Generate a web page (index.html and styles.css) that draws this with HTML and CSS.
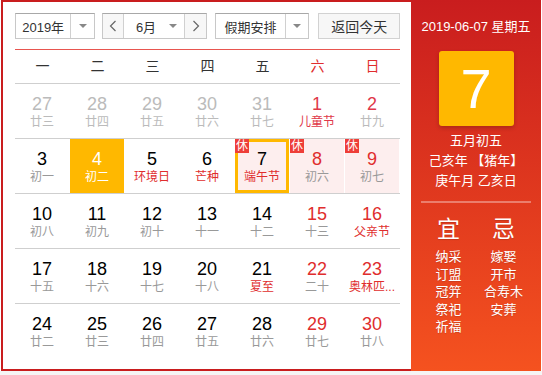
FILE: index.html
```html
<!DOCTYPE html>
<html lang="zh-CN">
<head>
<meta charset="utf-8">
<title>万年历</title>
<link rel="stylesheet" href="styles.css">
</head>
<body>
<div class="page">
  <div class="cal">
    <div class="main">
      <div class="toolbar">
        <div class="sel sel-year">
          <span class="sel-text">2019年</span>
          <span class="sel-arrow"><i class="tri"></i></span>
        </div>
        <div class="sel sel-month">
          <span class="nav nav-prev"><svg width="8" height="12" viewBox="0 0 8 12"><polyline points="6.5,1 1.5,6 6.5,11" fill="none" stroke="#666" stroke-width="1.2"/></svg></span>
          <span class="sel-text month-text">6月</span>
          <span class="month-arrow"><i class="tri"></i></span>
          <span class="nav nav-next"><svg width="8" height="12" viewBox="0 0 8 12"><polyline points="1.5,1 6.5,6 1.5,11" fill="none" stroke="#666" stroke-width="1.2"/></svg></span>
        </div>
        <div class="sel sel-holiday">
          <span class="sel-text">假期安排</span>
          <span class="sel-arrow"><i class="tri"></i></span>
        </div>
        <div class="btn-today">返回今天</div>
      </div>
      <div class="weekhead">
        <span>一</span><span>二</span><span>三</span><span>四</span><span>五</span><span class="wk">六</span><span class="wk">日</span>
      </div>
      <div class="grid">
        <div class="row">
          <div class="cell other"><b>27</b><em>廿三</em></div>
          <div class="cell other"><b>28</b><em>廿四</em></div>
          <div class="cell other"><b>29</b><em>廿五</em></div>
          <div class="cell other"><b>30</b><em>廿六</em></div>
          <div class="cell other"><b>31</b><em>廿七</em></div>
          <div class="cell other weekend"><b>1</b><em class="fest">儿童节</em></div>
          <div class="cell other weekend"><b>2</b><em>廿九</em></div>
        </div>
        <div class="row">
          <div class="cell"><b>3</b><em>初一</em></div>
          <div class="cell selected"><b>4</b><em>初二</em></div>
          <div class="cell"><b>5</b><em class="fest">环境日</em></div>
          <div class="cell"><b>6</b><em class="fest">芒种</em></div>
          <div class="cell rest today"><span class="badge">休</span><b>7</b><em class="fest">端午节</em></div>
          <div class="cell rest weekend"><span class="badge">休</span><b>8</b><em>初六</em></div>
          <div class="cell rest weekend"><span class="badge">休</span><b>9</b><em>初七</em></div>
        </div>
        <div class="row">
          <div class="cell"><b>10</b><em>初八</em></div>
          <div class="cell"><b>11</b><em>初九</em></div>
          <div class="cell"><b>12</b><em>初十</em></div>
          <div class="cell"><b>13</b><em>十一</em></div>
          <div class="cell"><b>14</b><em>十二</em></div>
          <div class="cell weekend"><b>15</b><em>十三</em></div>
          <div class="cell weekend"><b>16</b><em class="fest">父亲节</em></div>
        </div>
        <div class="row">
          <div class="cell"><b>17</b><em>十五</em></div>
          <div class="cell"><b>18</b><em>十六</em></div>
          <div class="cell"><b>19</b><em>十七</em></div>
          <div class="cell"><b>20</b><em>十八</em></div>
          <div class="cell"><b>21</b><em class="fest">夏至</em></div>
          <div class="cell weekend"><b>22</b><em>二十</em></div>
          <div class="cell weekend"><b>23</b><em class="fest">奥林匹...</em></div>
        </div>
        <div class="row">
          <div class="cell"><b>24</b><em>廿二</em></div>
          <div class="cell"><b>25</b><em>廿三</em></div>
          <div class="cell"><b>26</b><em>廿四</em></div>
          <div class="cell"><b>27</b><em>廿五</em></div>
          <div class="cell"><b>28</b><em>廿六</em></div>
          <div class="cell weekend"><b>29</b><em>廿七</em></div>
          <div class="cell weekend"><b>30</b><em>廿八</em></div>
        </div>
      </div>
    </div>
    <div class="side">
      <div class="side-date">2019-06-07 星期五</div>
      <div class="side-day">7</div>
      <div class="side-lunar">
        <div>五月初五</div>
        <div>己亥年 【猪年】</div>
        <div>庚午月 乙亥日</div>
      </div>
      <div class="side-line"></div>
      <div class="yiji">
        <div class="yj-col">
          <div class="yj-title">宜</div>
          <div>纳采</div><div>订盟</div><div>冠笄</div><div>祭祀</div><div>祈福</div>
        </div>
        <div class="yj-col">
          <div class="yj-title">忌</div>
          <div>嫁娶</div><div>开市</div><div>合寿木</div><div>安葬</div>
        </div>
      </div>
    </div>
  </div>
</div>
</body>
</html>
```

FILE: styles.css
```css
* { box-sizing: border-box; }
html, body { margin: 0; padding: 0; }
body {
  background: #f5f5f5;
  font-family: "Liberation Sans", "Noto Sans CJK SC", sans-serif;
  color: #333;
}
.page {
  background: #fff;
  padding-left: 1px;
  height: 371px;
}
.cal {
  display: flex;
  width: 540px;
  height: 371px;
}
.main {
  width: 410px;
  border: 2px solid #c91d1e;
  border-right: 0;
  padding: 11px 11px 0 12px;
}
.toolbar {
  display: flex;
  height: 26px;
  font-size: 13px;
}
.sel {
  display: flex;
  height: 26px;
  border: 1px solid #c8c8c8;
  border-top-color: #a8a8a8;
  background: #fff;
}
.sel-text {
  display: flex;
  align-items: center;
  justify-content: center;
  color: #333;
}
.sel-arrow, .month-arrow {
  display: flex;
  align-items: center;
  justify-content: center;
}
.sel-arrow { width: 24px; border-left: 1px solid #d0d0d0; }
.tri {
  display: block;
  width: 0; height: 0;
  border-left: 4px solid transparent;
  border-right: 4px solid transparent;
  border-top: 4px solid #888;
}
.sel-year { width: 80px; }
.sel-year .sel-text { width: 55px; }
.sel-month { width: 106px; margin-left: 7px; }
.nav {
  display: flex;
  align-items: center;
  justify-content: center;
  background: #f7f7f7;
}
.nav-prev { width: 21px; border-right: 1px solid #d0d0d0; }
.nav-next { width: 22px; border-left: 1px solid #d0d0d0; }
.month-text { width: 38px; padding-left: 6px; }
.month-arrow { width: 22px; }
.sel-holiday { width: 94px; margin-left: 8px; }
.sel-holiday .sel-text { width: 69px; }
.btn-today {
  width: 82px;
  height: 26px;
  margin-left: 9px;
  border: 1px solid #d2d2d2;
  background: #f7f7f7;
  display: flex;
  align-items: center;
  justify-content: center;
  font-size: 14px;
  color: #333;
}
.weekhead {
  display: grid;
  grid-template-columns: repeat(7, 55px);
  margin-top: 10px;
  border-top: 1px solid #e8554f;
  border-bottom: 1px solid #cfcfcf;
  height: 35px;
  align-items: center;
  font-size: 14px;
  padding-bottom: 4px;
}
.weekhead span { text-align: center; color: #333; }
.weekhead .wk { color: #e02d2d; }
.row {
  display: grid;
  grid-template-columns: repeat(7, 55px);
  height: 55px;
  border-bottom: 1px solid #cfcfcf;
}
.row:last-child { border-bottom: 0; }
.cell {
  position: relative;
  width: 54px;
  height: 54px;
  display: flex;
  flex-direction: column;
  align-items: center;
  padding-top: 10px;
  text-align: center;
}
.cell b {
  display: block;
  font-weight: normal;
  font-size: 18px;
  line-height: 20px;
  color: #000;
}
.cell em {
  display: block;
  font-style: normal;
  font-size: 12px;
  line-height: 17px;
  color: #999;
  white-space: nowrap;
}
.cell em.fest { color: #e02d2d; }
.cell.weekend b { color: #e02d2d; }
.cell.other b { color: #bbb; }
.cell.other em { color: #bbb; }
.cell.other.weekend b { color: #e0384a; }
.cell.other em.fest { color: #e0384a; }
.cell.rest { background: #fdeeee; }
.cell.selected { background: #ffb800; }
.cell.selected b, .cell.selected em { color: #fff; }
.cell.today { border: 3px solid #ffb800; padding-top: 7px; }
.badge {
  position: absolute;
  left: 0;
  top: 0;
  width: 14px;
  height: 14px;
  background: #ee3e38;
  color: #fff;
  font-size: 12px;
  line-height: 14px;
  text-align: center;
}
.cell.today .badge { left: -3px; top: -3px; }
.side {
  width: 130px;
  height: 371px;
  background: linear-gradient(180deg, #c91d1e 0%, #f5521f 100%);
  color: #fff;
  text-align: center;
  padding-top: 18px;
}
.side-date { font-size: 13px; line-height: 18px; }
.side-day {
  width: 75px;
  height: 75px;
  margin: 15px auto 0;
  background: #ffb800;
  border-radius: 3px;
  box-shadow: 0 2px 4px rgba(0, 0, 0, 0.2);
  font-size: 56px;
  line-height: 75px;
}
.side-lunar { margin-top: 5px; font-size: 13px; line-height: 20px; }
.side-line {
  height: 2px;
  margin: 10px 10px 0;
  background: rgba(255, 255, 255, 0.35);
}
.yiji {
  display: flex;
  padding: 0 10px;
  margin-top: 11px;
}
.yj-col {
  width: 55px;
  font-size: 13px;
  line-height: 17.5px;
  text-shadow: 0 1px 1px rgba(0, 0, 0, 0.15);
}
.yj-title {
  font-size: 23px;
  line-height: 30px;
  margin-bottom: 4px;
}
```
